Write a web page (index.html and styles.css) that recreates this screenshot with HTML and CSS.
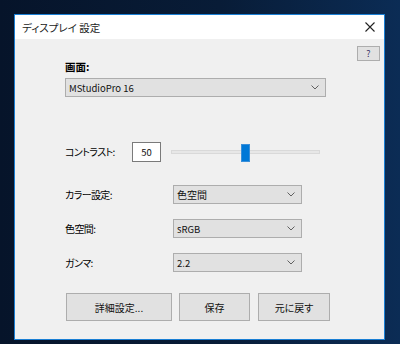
FILE: index.html
```html
<!DOCTYPE html>
<html lang="ja">
<head>
<meta charset="utf-8">
<link rel="stylesheet" href="styles.css">
</head>
<body>
<div class="window">
  <div class="titlebar">
    <span class="title">ディスプレイ 設定</span>
    <svg class="close" width="10" height="10" viewBox="0 0 10 10"><path d="M0.5 0.5L9.5 9.5M9.5 0.5L0.5 9.5" stroke="#222" stroke-width="1.1" fill="none"/></svg>
  </div>
  <div class="content">
    <div class="help-row"><button class="help">?</button></div>
    <div class="screen-label">画面:</div>
    <div class="select wide"><span class="latin">MStudioPro 16</span><svg class="chev" width="8" height="5" viewBox="0 0 8 5"><path d="M0.5 0.5L4 4L7.5 0.5" stroke="#606060" stroke-width="1" fill="none"/></svg></div>
    <div class="contrast-row">
      <span class="label">コントラスト:</span>
      <div class="num">50</div>
      <div class="slider"><div class="track"></div><div class="thumb"></div></div>
    </div>
    <div class="form">
      <span class="label">カラー設定:</span>
      <div class="select small"><span>色空間</span><svg class="chev" width="8" height="5" viewBox="0 0 8 5"><path d="M0.5 0.5L4 4L7.5 0.5" stroke="#606060" stroke-width="1" fill="none"/></svg></div>
      <span class="label">色空間:</span>
      <div class="select small"><span class="latin">sRGB</span><svg class="chev" width="8" height="5" viewBox="0 0 8 5"><path d="M0.5 0.5L4 4L7.5 0.5" stroke="#606060" stroke-width="1" fill="none"/></svg></div>
      <span class="label">ガンマ:</span>
      <div class="select small"><span class="latin">2.2</span><svg class="chev" width="8" height="5" viewBox="0 0 8 5"><path d="M0.5 0.5L4 4L7.5 0.5" stroke="#606060" stroke-width="1" fill="none"/></svg></div>
    </div>
    <div class="buttons">
      <button class="btn b1">詳細設定...</button>
      <button class="btn b2">保存</button>
      <button class="btn b3">元に戻す</button>
    </div>
  </div>
</div>
</body>
</html>
```

FILE: styles.css
```css
* { box-sizing: border-box; }
html, body { margin: 0; height: 100%; }
body {
  width: 400px;
  height: 344px;
  overflow: hidden;
  padding: 14px 0 0 14px;
  background: linear-gradient(90deg, #06142a 0%, #081c37 55%, #0b2c55 100%);
  font-family: "Noto Sans CJK JP", "Noto Sans", sans-serif;
  font-feature-settings: "palt";
  color: #000;
}
.window {
  width: 371px;
  height: 326px;
  border: 1px solid #1a7fd4;
  background: #f0f0f0;
  display: flex;
  flex-direction: column;
}
.titlebar {
  height: 24px;
  background: #fff;
  display: flex;
  align-items: center;
  justify-content: space-between;
  padding: 0 9px 0 7px;
  flex: none;
}
.title { font-size: 10.5px; color: #222; }
.close { display: block; }
.content {
  flex: 1;
  padding: 7px 4px 0 50px;
  display: flex;
  flex-direction: column;
}
.help-row { display: flex; justify-content: flex-end; height: 15px; }
.help {
  width: 23px; height: 15px;
  border: 1px solid #adadad;
  background: #e1e1e1;
  font: inherit;
  font-size: 9px;
  color: #3a3366;
  padding: 0;
  line-height: 12px;
}
.screen-label {
  margin-top: -1px;
  font-size: 10.5px;
  font-weight: 700;
  line-height: 14px;
  height: 18px;
}
.select {
  height: 19px;
  border: 1px solid #adadad;
  background: #e1e1e1;
  display: flex;
  align-items: center;
  justify-content: space-between;
  padding: 0 6px 0 3px;
  font-size: 10px;
  color: #111;
}
.latin { font-size: 9.5px; }
.select.wide { width: 261px; }
.select.small { width: 129px; }
.chev { display: block; }
.contrast-row {
  margin-top: 45px;
  display: flex;
  align-items: center;
  height: 20px;
}
.label { font-size: 10px; line-height: 14px; letter-spacing: -0.6px; }
.contrast-row .label { width: 67px; }
.num {
  width: 29px; height: 20px;
  border: 1px solid #7a7a7a;
  background: #fff;
  font-size: 9.5px;
  display: flex; align-items: center; justify-content: center;
  color: #111;
}
.slider {
  position: relative;
  margin-left: 10px;
  width: 149px;
  height: 20px;
  display: flex;
  align-items: center;
}
.track {
  width: 100%;
  height: 4px;
  background: #e7e7e7;
  border: 1px solid #d9d9d9;
}
.thumb {
  position: absolute;
  left: 70px;
  top: 2px;
  width: 9px;
  height: 18px;
  background: #0078d7;
  border: 1px solid #3a8fd9;
}
.form {
  margin-top: 23px;
  display: grid;
  grid-template-columns: 108px 129px;
  row-gap: 15px;
  align-items: center;
}
.buttons {
  margin-top: 21px;
  display: flex;
  gap: 7px;
  padding-left: 1px;
}
.btn {
  height: 28px;
  border: 1px solid #adadad;
  background: #e1e1e1;
  font: inherit;
  font-size: 10px;
  color: #111;
  padding: 0;
}
.b1 { width: 106px; }
.b2 { width: 71px; }
.b3 { width: 72px; margin-left: 1px; }
```
